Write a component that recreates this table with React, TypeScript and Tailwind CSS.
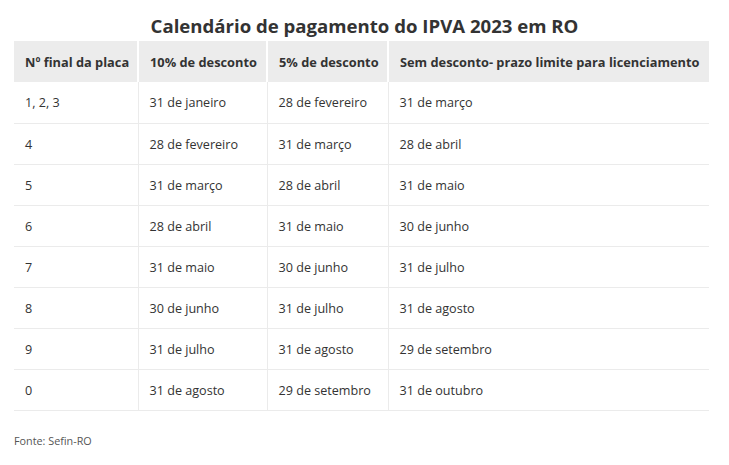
import React from "react";

const rows: string[][] = [
  ["1, 2, 3", "31 de janeiro", "28 de fevereiro", "31 de março"],
  ["4", "28 de fevereiro", "31 de março", "28 de abril"],
  ["5", "31 de março", "28 de abril", "31 de maio"],
  ["6", "28 de abril", "31 de maio", "30 de junho"],
  ["7", "31 de maio", "30 de junho", "31 de julho"],
  ["8", "30 de junho", "31 de julho", "31 de agosto"],
  ["9", "31 de julho", "31 de agosto", "29 de setembro"],
  ["0", "31 de agosto", "29 de setembro", "31 de outubro"],
];

const headers = [
  "Nº final da placa",
  "10% de desconto",
  "5% de desconto",
  "Sem desconto- prazo limite para licenciamento",
];

const widths = ["w-[124px]", "w-[129px]", "w-[121px]", "w-[321px]"];

const App: React.FC = () => {
  return (
    <div
      className="w-[729px] h-[465px] bg-white text-[#333] pt-[12px] px-[14px]"
      style={{ fontFamily: '"Open Sans", "Liberation Sans", sans-serif' }}
    >
      <h1 className="text-center text-[18.6px] leading-[27px] font-bold mb-[2px]">
        Calendário de pagamento do IPVA 2023 em RO
      </h1>

      <table className="w-[695px] border-collapse table-fixed">
        <thead>
          <tr className="bg-[#ececec]">
            {headers.map((h, i) => (
              <th
                key={h}
                className={`${widths[i]} h-[41px] px-[11px] pt-[2px] text-left text-[12.8px] font-bold whitespace-nowrap ${
                  i > 0 ? "border-l-2 border-white" : ""
                }`}
              >
                {h}
              </th>
            ))}
          </tr>
        </thead>
        <tbody>
          {rows.map((r) => (
            <tr key={r[0]} className="border-b border-[#ebebeb]">
              {r.map((c, i) => (
                <td
                  key={i}
                  className={`h-[41px] px-[11px] pt-[3px] text-[12.6px] whitespace-nowrap ${
                    i > 0 ? "border-l border-[#ebebeb]" : ""
                  }`}
                >
                  {c}
                </td>
              ))}
            </tr>
          ))}
        </tbody>
      </table>

      <p className="mt-[22px] text-[10.8px] text-[#555]">Fonte: Sefin-RO</p>
    </div>
  );
};

export default App;
